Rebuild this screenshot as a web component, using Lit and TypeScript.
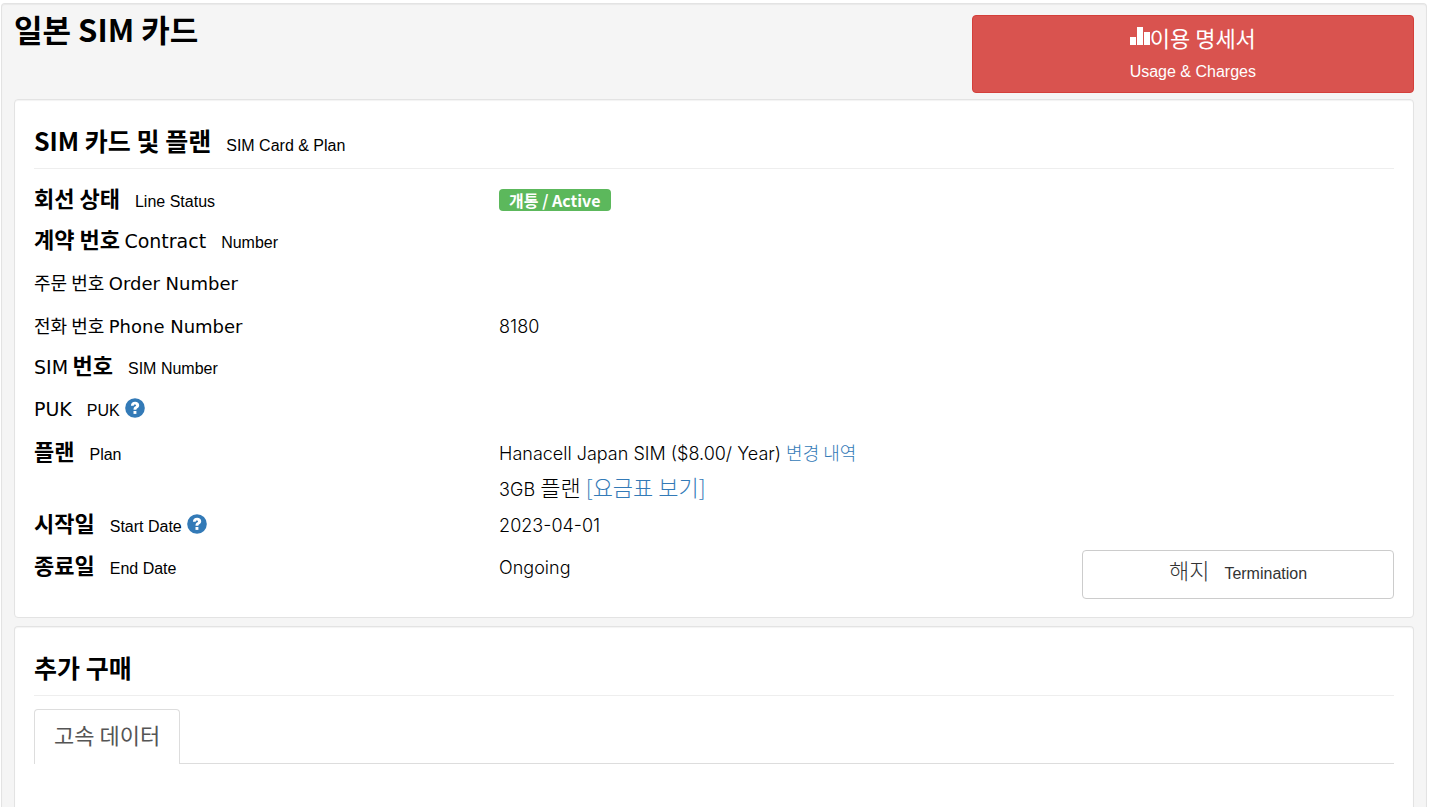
import { LitElement, html, css, svg, nothing, type TemplateResult } from "lit";
import { customElement } from "lit/decorators.js";

const helpIcon = svg`<svg class="help-icon" viewBox="0 0 20 20" aria-hidden="true">
  <circle cx="10" cy="10" r="9.8" fill="#337ab7"/>
  <path d="M5.9 7.7C6 5.1 7.6 3.8 10.1 3.8c2.400 0 4.100 1.300 4.100 3.400 0 1.500-.8 2.300-1.800 3-.8.5-1 .8-1 1.500H8.500c0-1.700.500-2.400 1.500-3.100.8-.5 1.100-.8 1.100-1.300 0-.6-.4-.9-1.100-.9-.8 0-1.200.5-1.300 1.300z" fill="#fff"/>
  <path d="M8.500 13h2.900v2.900H8.500z" fill="#fff"/>
</svg>`;

const chartIcon = svg`<svg class="chart-icon" viewBox="0 0 20 18" aria-hidden="true">
  <path d="M0 10h6v8H0zM7 0h6v18H7zM14 5h6v13h-6z" fill="currentColor"/>
</svg>`;

interface Row {
  label: TemplateResult;
  value?: TemplateResult;
  kind?: string;
}

const rows: Row[] = [
  {
    label: html`<b class="ko">회선 상태</b><span class="en">Line Status</span>`,
    value: html`<span class="status">개통 / Active</span>`,
  },
  { label: html`<b class="ko">계약 번호</b> <span class="wide large">Contract</span><span class="en">Number</span>` },
  { label: html`<span class="ko-small">주문 번호</span> <span class="wide">Order Number</span>` },
  {
    label: html`<span class="ko-small">전화 번호</span> <span class="wide">Phone Number</span>`,
    value: html`8180`,
  },
  { label: html`<span class="wide large">SIM</span> <b class="ko">번호</b><span class="en">SIM Number</span>` },
  {
    label: html`<span class="wide large">PUK</span><span class="en">PUK</span>
      <button class="help" aria-label="PUK">${helpIcon}</button>`,
  },
  {
    kind: "plan",
    label: html`<b class="ko">플랜</b><span class="en">Plan</span>`,
    value: html`<div>Hanacell Japan SIM ($8.00/ Year) <a class="link-small" href="#history">변경 내역</a></div>
      <div>3GB <span class="ko">플랜</span> <a class="ko" href="#rates">[요금표 보기]</a></div>`,
  },
  {
    label: html`<b class="ko">시작일</b><span class="en">Start Date</span>
      <button class="help" aria-label="Start Date">${helpIcon}</button>`,
    value: html`2023-04-01`,
  },
  {
    kind: "end",
    label: html`<b class="ko">종료일</b><span class="en">End Date</span>`,
    value: html`<span>Ongoing</span>
      <button class="terminate"><span class="ko">해지</span><span class="en">Termination</span></button>`,
  },
];

@customElement("app-root")
export class AppRoot extends LitElement {
  static styles = css`
    :host {
      display: flex;
      flex-direction: column;
      box-sizing: border-box;
      min-height: 100vh;
      padding: 3px 8px 0 1px;
      background: #fff;
      color: #000;
      font-family: "Liberation Sans", "Noto Sans CJK KR", sans-serif;
      font-size: 16px;
    }
    * {
      box-sizing: border-box;
    }
    button {
      font: inherit;
      cursor: pointer;
    }
    a {
      color: #337ab7;
      text-decoration: none;
    }
    h1,
    h2,
    dl,
    dd {
      margin: 0;
    }
    .well {
      flex: 1;
      display: flex;
      flex-direction: column;
      padding: 11px 12px 0;
      border: 1px solid #e3e3e3;
      border-bottom: 0;
      border-radius: 4px 4px 0 0;
      background: #f5f5f5;
      box-shadow: inset 0 1px 1px rgba(0, 0, 0, 0.05);
    }
    .top {
      display: flex;
      justify-content: space-between;
      align-items: flex-start;
      margin-bottom: 6px;
    }
    h1 {
      font: 700 31px/28px "Noto Sans CJK KR", sans-serif;
    }
    .usage {
      display: flex;
      flex-direction: column;
      align-items: center;
      gap: 3px;
      width: 31.6%;
      padding: 6px 12px 5px;
      border: 1px solid #d43f3a;
      border-radius: 4px;
      background: #d9534f;
      color: #fff;
      line-height: 31px;
    }
    .usage .ko {
      display: flex;
      align-items: center;
    }
    .chart-icon {
      width: 20px;
      height: 18px;
      margin-bottom: 4px;
    }
    .card {
      padding: 19px;
      border: 1px solid #e3e3e3;
      border-radius: 4px;
      background: #fff;
      box-shadow: inset 0 1px 1px rgba(0, 0, 0, 0.05);
      margin-bottom: 8px;
    }
    .card.last {
      flex: 1;
      margin-bottom: 0;
      border-bottom: 0;
      border-radius: 4px 4px 0 0;
    }
    h2 {
      height: 50px;
      border-bottom: 1px solid #eee;
      font: 700 25px/42px "Noto Sans CJK KR", sans-serif;
    }
    .en {
      margin-left: 15px;
      font: 400 16px/20px "Liberation Sans", sans-serif;
    }
    .ko {
      font-family: "Noto Sans CJK KR", sans-serif;
      font-size: 22px;
    }
    .ko-small,
    .link-small {
      font-family: "Noto Sans CJK KR", sans-serif;
      font-size: 18px;
    }
    .wide {
      font-family: "DejaVu Sans", sans-serif;
      font-size: 18px;
    }
    .wide.large {
      font-size: 19px;
    }
    .details {
      padding-top: 11px;
    }
    .row {
      display: flex;
      align-items: baseline;
      height: 42px;
      line-height: 42px;
    }
    .row .ko,
    .row .ko-small,
    .row .link-small,
    .row .wide {
      line-height: 20px;
    }
    .row dt {
      flex: 0 0 34.2%;
    }
    .row dd {
      flex: 1;
      font-family: Inter, "Liberation Sans", sans-serif;
      font-size: 18px;
      font-weight: 300;
    }
    .row.plan {
      height: 73px;
      padding-top: 4px;
      line-height: 36px;
    }
    .row.end {
      height: 51px;
    }
    .row.end dd {
      display: flex;
      justify-content: space-between;
      align-items: baseline;
    }
    .status {
      display: inline-block;
      padding: 0 10px;
      border-radius: 4px;
      background: #5cb85c;
      color: #fff;
      font: 700 16px/22px "Noto Sans CJK KR", sans-serif;
    }
    .help {
      margin-left: 1px;
      padding: 0;
      border: 0;
      background: none;
      line-height: 20px;
      vertical-align: -2px;
    }
    .help-icon {
      display: block;
      width: 20px;
      height: 20px;
    }
    .terminate {
      align-self: flex-start;
      width: 312px;
      height: 49px;
      margin-top: 3px;
      padding-bottom: 4px;
      border: 1px solid #ccc;
      border-radius: 4px;
      background: #fff;
      color: #333;
      line-height: 32px;
    }
    .tabs {
      display: flex;
      margin-top: 13px;
      border-bottom: 1px solid #ddd;
    }
    .tab {
      height: 55px;
      margin-bottom: -1px;
      padding: 0 19px 6px;
      border: 1px solid #ddd;
      border-bottom: 0;
      border-radius: 4px 4px 0 0;
      background: #fff;
      color: #555;
    }
  `;

  render() {
    return html`
      <main class="well">
        <header class="top">
          <h1>일본 SIM 카드</h1>
          <button class="usage">
            <span class="ko">${chartIcon}이용 명세서</span>
            <span>Usage &amp; Charges</span>
          </button>
        </header>
        <section class="card">
          <h2>SIM 카드 및 플랜<span class="en">SIM Card &amp; Plan</span></h2>
          <dl class="details">
            ${rows.map(
              (row) => html`<div class="row ${row.kind ?? ""}">
                <dt>${row.label}</dt>
                <dd>${row.value ?? nothing}</dd>
              </div>`
            )}
          </dl>
        </section>
        <section class="card last">
          <h2>추가 구매</h2>
          <div class="tabs" role="tablist">
            <button class="tab ko" role="tab" aria-selected="true">고속 데이터</button>
          </div>
        </section>
      </main>
    `;
  }
}
